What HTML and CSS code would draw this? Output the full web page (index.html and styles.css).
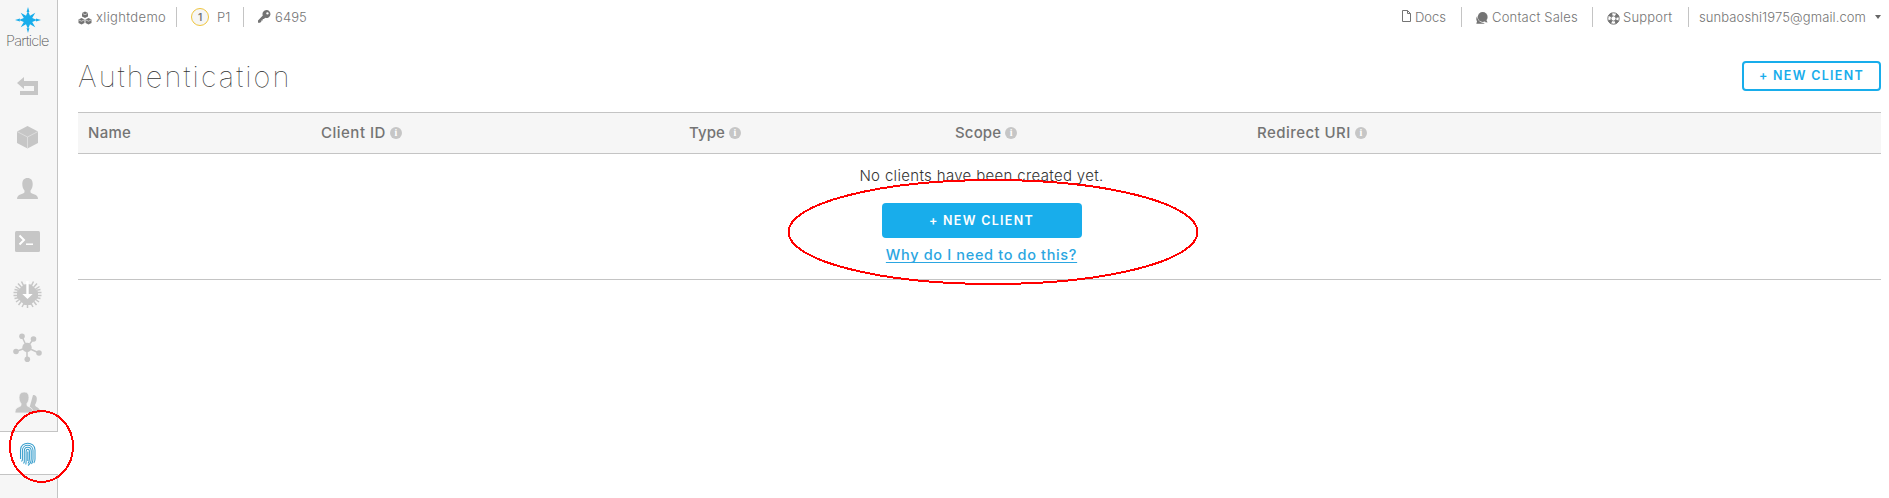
FILE: index.html
```html
<!DOCTYPE html>
<html lang="en">
<head>
<meta charset="utf-8">
<title>Authentication</title>
<link rel="stylesheet" href="styles.css">
</head>
<body>
<div class="app">
  <nav class="sidebar">
    <a class="logo">
      <svg width="57" height="33" viewBox="0 0 57 33"><path fill="#18adeb" d="M28 11l2 4.800 5.300-3.100-3.100 5.300L37 20l-4.800 2 3.100 5.300L30 24.200 28 29l-2-4.800-5.300 3.100 3.100-5.300L19 20l4.800-2-3.100-5.300 5.300 3.100zM26.600 12L28 7l1.400 5zM26.600 28l1.400 5 1.400-5zM20 18.600L15 20l5 1.400zM36 18.600l5 1.400-5 1.400z"/></svg>
      <span class="logo-text">Particle</span>
    </a>
    <a class="slot h52"><svg viewBox="0 60 57 52"><path d="M17 83l7-6v4h14v14H20v-4h14v-5H24v3z"/></svg></a>
    <a class="slot h50"><svg viewBox="0 112 57 50"><path d="M27.500 126L38 131.500V143l-10.500 5.500L17 143v-11.500z"/><path fill="none" stroke="#e2e2e2" stroke-width=".8" d="M17 131.500l10.500 5.500 10.500-5.500M27.500 137v11.500"/></svg></a>
    <a class="slot h52"><svg viewBox="0 162 57 52"><path d="M27.500 178c3.500 0 5.200 2.200 5.200 6 0 3-.8 4.800-2.200 6.500v1.700c1 2 7.500 1.500 7.500 6.800H17c0-5.300 6.500-4.800 7.500-6.800v-1.700c-1.400-1.700-2.200-3.500-2.200-6.500 0-3.800 1.700-6 5.200-6z"/></svg></a>
    <a class="slot h54"><svg viewBox="0 214 57 54"><rect x="15" y="231" width="25" height="21" rx="1.500"/><path fill="none" stroke="#fff" stroke-width="2" d="M19.500 235.500l4.500 4.500-4.500 4.500"/><path fill="none" stroke="#fff" stroke-width="1.500" d="M26 244.200h7"/></svg></a>
    <a class="slot h53"><svg viewBox="0 268 57 53"><path d="M27.500 284L31 284.500 38 291.500 38 297.500 30.500 305 24.500 305 17 297.500 17 291.500 24 284.500z"/><path fill="none" stroke="#c6c6c6" stroke-width="1.500" d="M13.500 292.500h5M13.500 295.500h5M36.500 292.500h5M36.500 295.500h5M14.500 298.500l4-.8M16 302l4-3M18.500 305l3.500-4.500M22 307l2.500-4.500M33 307l-2.500-4.500M36.500 305l-3.500-4.500M39 302l-4-3M40.500 298.500l-4-.8M14.500 289.500l4 .8M15.500 286.500l4.500 3M18 283.500l4 4.500M21.500 281.500l2.500 5M33.500 281.500l-2.500 5M37 283.500l-4 4.500M39.500 286.500l-4.500 3M40.500 289.500l-4 .8M27.500 303v5"/><path fill="#fff" d="M26.300 281h2.400v13h4l-5.200 5-5.200-5h4z"/></svg></a>
    <a class="slot h53"><svg viewBox="0 321 57 53"><path fill="none" stroke="#c6c6c6" stroke-width="1.500" d="M27 347.500L22 336.500M27 347.500L33.500 339M27 347.500L16 351.500M27 347.500L39 353M27 347.500V359.500"/><circle cx="27" cy="347.500" r="4.700"/><circle cx="22" cy="336.300" r="2.800"/><circle cx="33.500" cy="339" r="2.800"/><circle cx="16" cy="351.500" r="2.800"/><circle cx="39" cy="353" r="2.800"/><circle cx="27.300" cy="359.300" r="2.800"/></svg></a>
    <a class="slot h57"><svg viewBox="0 374 57 57"><path d="M33 395c3.500 0 4.300 2.500 3.600 6-.4 2-1.300 3-1.600 4 .3 2.500 5 2 5 6.500v1.500H28z"/><path stroke="#f6f6f6" stroke-width=".8" d="M24.200 392c3.400 0 4.800 2 4.800 5.500 0 2.500-.7 4.500-2 6v2c1 1.500 4.500 1.600 5.400 4 .5 1 .6 2 .6 3.500H15c0-1.500.1-2.500.6-3.500.9-2.400 4.400-2.500 5.400-4v-2c-1.300-1.500-2-3.500-2-6 0-3.500 1.700-5.500 5.200-5.500z"/></svg></a>
    <a class="slot active"><svg viewBox="0 431 57 42"><path fill="none" stroke="#3a9fcd" stroke-width="1.050" d="M20.500 458V449C20.500 440 35 440 35 449V458M21.500 460.500L22.400 459V449.500C22.400 442.500 33 442.500 33 449.500V458C33 460 32.500 461.500 31.500 463M23.500 462.500L24.300 461V450C24.300 445 31.200 445 31.200 450V458C31.200 460.500 30 463 28 464.500M25.800 463.500L26.100 461V450.500C26.100 447.500 29.400 447.500 29.400 450.500V458C29.400 460 28.800 461.500 28 462.500M27.800 450.500V460M35 458C35 460 34.500 461 33.800 462"/></svg></a>
  </nav>
  <main class="main">
    <header class="topbar">
      <div class="group">
        <span class="item product"><svg class="ico" width="14" height="14" viewBox="0 0 14 14"><path d="M7 .5l3 1.500v3.500L7 7 4 5.500V2zM3.500 7l3 1.500V12l-3 1.500-3-1.500V8.500zM10.500 7l3 1.500V12l-3 1.500-3-1.500V8.500z"/><path fill="none" stroke="#fff" stroke-width=".6" d="M4.500 2.500L7 3.700l2.500-1.200M1 9l2.500 1.200L6 9M8 9l2.500 1.200L13 9"/></svg><span class="t-product">xlightdemo</span></span>
        <span class="item device"><span class="badge">1</span><span>P1</span></span>
        <span class="item id"><svg class="ico key" width="13" height="13" viewBox="0 0 13 13"><path fill-rule="evenodd" d="M8.500 0a4 4 0 1 1-1.300 7.800L6 9H4.700v1.400H3.300v1.300L2 12.700H0v-2.200L4.800 5.500A4 4 0 0 1 8.500 0zm.9 2.200a1.200 1.200 0 1 0 .1 2.400 1.200 1.200 0 0 0-.1-2.400z"/></svg><span class="t-id">6495</span></span>
      </div>
      <div class="group">
        <span class="item docs"><svg class="ico up" width="9" height="12" viewBox="0 0 9 12"><path fill="none" stroke="#747474" d="M.5.500h5l3 3v8h-8zM5.500.500v3h3"/></svg><span class="t-docs">Docs</span></span>
        <span class="item sales"><svg class="ico" width="12" height="12" viewBox="0 0 12 12"><circle cx="6.700" cy="5" r="4.900"/><path d="M1.200 4C-.2 6.200.2 8.200 1 9.200L.3 11.700h6.500c1 0 1.500-.3 2-.8C5.500 11.300 1.300 9 1.200 4zM10.500 8l1 2.500-3-.6z"/></svg><span class="t-sales">Contact Sales</span></span>
        <span class="item support"><svg class="ico down" width="13" height="13" viewBox="0 0 13 13"><circle cx="6.500" cy="6.500" r="4.200" fill="none" stroke="#747474" stroke-width="3.400" stroke-dasharray="3.300 3.300" transform="rotate(22.500 6.500 6.500)"/><circle cx="6.500" cy="6.500" r="5.700" fill="none" stroke="#747474" stroke-width="1"/><circle cx="6.500" cy="6.500" r="2.500" fill="none" stroke="#747474" stroke-width=".8"/></svg><span class="t-support">Support</span></span>
        <span class="item user"><span class="t-user">sunbaoshi1975@gmail.com</span><i class="caret"></i></span>
      </div>
    </header>
    <div class="heading"><h1>Authentication</h1><button class="btn outline">+ NEW CLIENT</button></div>
    <section class="table">
      <div class="thead">
        <span class="th"><span class="name">Name</span></span>
        <span class="th"><span class="client">Client ID</span><i class="info">i</i></span>
        <span class="th"><span class="type">Type</span><i class="info">i</i></span>
        <span class="th"><span class="scope">Scope</span><i class="info">i</i></span>
        <span class="th"><span class="redirect">Redirect URI</span><i class="info">i</i></span>
      </div>
      <div class="empty">
        <p>No clients have been created yet.</p>
        <button class="btn solid">+ NEW CLIENT</button>
        <a class="why">Why do I need to do this?</a>
      </div>
    </section>
  </main>
</div>
<svg class="marks" width="1889" height="498" viewBox="0 0 1889 498" shape-rendering="crispEdges"><ellipse cx="41.500" cy="446.500" rx="31.500" ry="35.500"/><ellipse cx="993" cy="232" rx="204.500" ry="52"/></svg>
</body>
</html>
```
FILE: styles.css
```css
* { box-sizing: border-box; }
body { margin: 0; background: #fff; font-family: Inter, "Open Sans", sans-serif; color: #747474; overflow: hidden; }
.app { display: flex; height: 498px; }
.sidebar { width: 58px; flex: none; background: #f6f6f6; border-right: 1px solid #c4c4c4; display: flex; flex-direction: column; }
.logo { height: 60px; flex: none; display: flex; flex-direction: column; }
.logo svg { flex: none; }
.logo-text { font-size: 14.5px; line-height: 16px; font-weight: 200; letter-spacing: -.75px; padding-left: 6px; color: #555; white-space: nowrap; }
.slot { display: block; flex: none; width: 57px; fill: #c6c6c6; }
.slot svg { display: block; width: 57px; height: 100%; }
.h50 { height: 50px; }
.h52 { height: 52px; }
.h53 { height: 53px; }
.h54 { height: 54px; }
.h57 { height: 57px; }
.active { height: 44px; width: 58px; background: #fff; border-top: 1px solid #c4c4c4; border-bottom: 1px solid #c4c4c4; }
.main { flex: 1; padding: 0 8px 0 20px; }
.topbar { height: 34px; display: flex; justify-content: space-between; align-items: center; font-size: 13px; font-weight: 300; white-space: nowrap; }
.group { display: flex; align-items: center; }
.item { display: flex; align-items: center; height: 20px; border-left: 1px solid #c4c4c4; }
.product, .docs { border-left: 0; }
.product { width: 98px; gap: 4px; }
.device { width: 67px; padding-left: 14px; gap: 8px; }
.id { padding-left: 14px; gap: 4px; }
.docs { width: 59px; gap: 4px; }
.sales { width: 131px; padding-left: 14px; gap: 4px; }
.support { width: 96px; padding-left: 14px; gap: 3px; }
.user { width: 193px; padding-left: 10px; justify-content: space-between; }
.t-product { letter-spacing: .35px; }
.t-sales { letter-spacing: .2px; }
.t-support { letter-spacing: .2px; }
.t-user { letter-spacing: .1px; }
.t-id { letter-spacing: .1px; }
.ico { flex: none; fill: #747474; position: relative; top: 1px; }
.up, .key { top: -1px; }
.badge { width: 18px; height: 18px; border: 1px solid #efc53d; border-radius: 50%; background: #f6f6f6; font-size: 10px; line-height: 16px; font-weight: 600; text-align: center; }
.caret { border: 3.5px solid transparent; border-top: 4px solid #666; border-bottom: 0; }
.heading { height: 78px; display: flex; justify-content: space-between; align-items: flex-start; padding-top: 27px; }
h1 { margin: -2px 0 0; font-size: 29px; line-height: 35px; font-weight: 100; color: #333; letter-spacing: 2.1px; }
.btn { font: 600 12.500px/1 Inter, sans-serif; letter-spacing: 1.3px; border-radius: 4px; padding: 1px 0 0; white-space: nowrap; }
.outline { width: 139px; height: 30px; border: 2px solid #18adeb; background: #fff; color: #18adeb; }
.solid { width: 200px; height: 35px; border: 0; background: #18adeb; color: #fff; }
.table { height: 168px; border-bottom: 1px solid #c4c4c4; }
.thead { height: 42px; border-top: 1px solid #c4c4c4; border-bottom: 1px solid #c4c4c4; background: #f6f6f6; display: grid; grid-template-columns: 233px 368px 266px 302px 1fr; padding: 0 0 1px 10px; align-items: center; font-size: 15px; font-weight: 500; }
.th { display: flex; align-items: center; gap: 4px; white-space: nowrap; }
.name { letter-spacing: .3px; }
.client { letter-spacing: .5px; }
.type { letter-spacing: .1px; }
.scope { letter-spacing: .15px; }
.redirect { letter-spacing: .45px; }
.info { width: 12px; height: 12px; border-radius: 50%; background: #c6c6c6; color: #fff; font: bold 10px/12px "Liberation Serif", serif; text-align: center; }
.empty { height: 125px; display: flex; flex-direction: column; align-items: center; padding-left: 4px; }
.empty p { margin: 11px 0 17px; font-size: 15px; line-height: 21px; font-weight: 300; color: #333; letter-spacing: .33px; }
.why { margin-top: 7px; font-size: 14.500px; line-height: 20px; font-weight: 500; color: #2ba6e1; text-decoration: underline; text-underline-offset: 2px; text-decoration-skip-ink: none; letter-spacing: .65px; }
.marks { position: absolute; left: 0; top: 0; pointer-events: none; fill: none; stroke: #f00; stroke-width: 2; }
```
